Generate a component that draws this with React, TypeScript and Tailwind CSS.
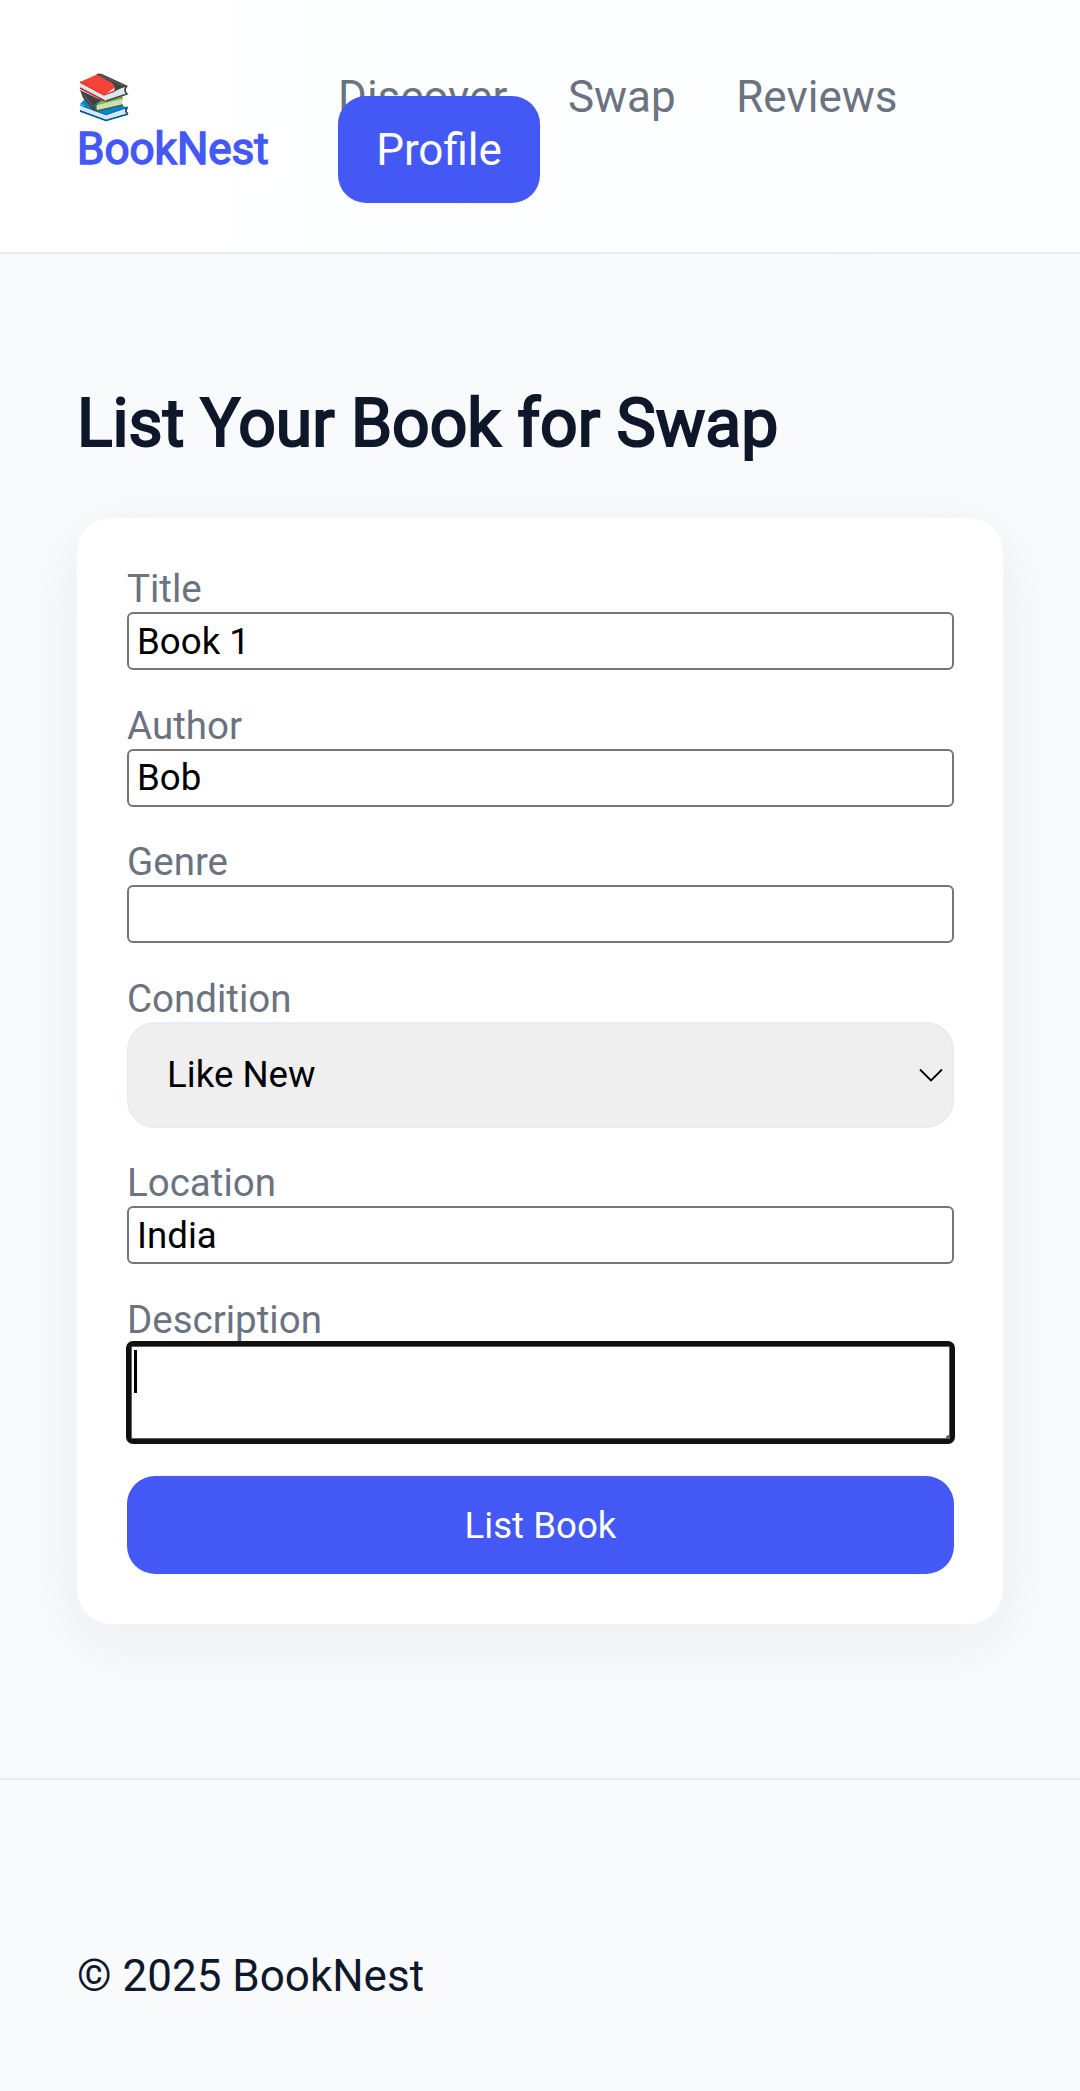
import type { ReactNode } from "react";

function Books() {
  return (
    <svg viewBox="0 0 50 50" className="ml-[2px] block h-[50px] w-[50px]" aria-label="Books">
      <path d="M1 35 L21 25 L49 35 L47 39 L48 42 L27 48 L1 38Z" fill="#0277bd" />
      <path d="M2 33 L27 42 L48 35 Q45 38 48 41 L27 47 L1 37 Q0 35 2 33Z" fill="#d5e8f1" />
      <path d="M1 31 L6 26 L21 27 L46 34 L27 41Z" fill="#0288d1" />
      <path d="M1 32 L27 41.500 L49 34" fill="none" stroke="#0277bd" strokeWidth="1.2" />
      <path d="M1 38 L27 47.500 L49 41" fill="none" stroke="#01579b" strokeWidth="1.5" />
      <path d="M48 34 Q45 38 49 41" fill="none" stroke="#37474f" strokeWidth="1.6" />
      <path d="M22 28 L43 22 L44 25 L42 29 L44 32 L18 38 L14 34Z" fill="#7cb342" />
      <path d="M18 32 L43 26 Q41 29 44 32 L18 37Z" fill="#c9e0b8" />
      <path d="M1 17 L22 27 L15 32 L18 38 L14 37 L4 25Z" fill="#424242" />
      <path d="M5 22 L14 34" stroke="#616161" strokeWidth="1.2" />
      <path d="M18 31 Q14 34 18 38 L44 32" fill="none" stroke="#455a45" strokeWidth="1.3" />
      <path d="M1 9 L25 21 L48 14 Q45 18 47 21 L27 28 L1 15Z" fill="#d9e9f0" />
      <path d="M1 9 L19 1 L41 11 L25 22Z" fill="#f44336" />
      <path d="M17 1 Q20 0 23 1 L49 13 Q47 14 43 15 L34 19 Q38 14 33 10Z" fill="#424242" />
      <path d="M21 2 L44 12.500" stroke="#616161" strokeWidth="1.3" />
      <path d="M1 9 L25 22 L36 18" fill="none" stroke="#e53935" strokeWidth="1.5" />
      <path d="M1 15 L26 28" fill="none" stroke="#c62828" strokeWidth="1.5" />
      <path d="M48 13 Q44 17 48 21 L27 28" fill="none" stroke="#424242" strokeWidth="1.7" />
    </svg>
  );
}

function Field({ label, children }: { label: string; children: ReactNode }) {
  return (
    <label className="block">
      <span className="block h-[46px] text-[38.5px] leading-[45px] text-[#6b7280]">{label}</span>
      {children}
    </label>
  );
}

function TextInput({ value }: { value: string }) {
  return (
    <input
      type="text"
      defaultValue={value}
      className="block h-[58px] w-full rounded-[6px] border-2 border-[#767676] bg-white px-[8px] text-[36.67px] leading-[43px] text-black outline-none"
    />
  );
}

export default function App() {
  return (
    <div className="flex min-h-[2091px] w-[1080px] flex-col bg-[#f8fafc] font-[Roboto,sans-serif] text-[44px] leading-[52px] text-[#0f172a]">
      <header className="flex h-[254px] items-start border-b-2 border-[#e6ecf4] bg-gradient-to-r from-white to-[#fbfdff] px-[77px] pt-[71px]">
        <div className="w-[261px] text-[#4458f5]">
          <div className="h-[52px] pt-[2px]">
            <Books />
          </div>
          <div className="[-webkit-text-stroke:1.5px_#4458f5]">BookNest</div>
        </div>
        <nav className="text-[#6b7280]">
          <div className="flex gap-[60.5px]">
            <a>Discover</a>
            <a>Swap</a>
            <a>Reviews</a>
          </div>
          <a className="relative -mt-[27px] flex h-[107px] w-[202px] items-center justify-center rounded-[28px] bg-[#4458f5] text-white">
            Profile
          </a>
        </nav>
      </header>

      <main className="px-[77px] pt-[130px]">
        <h1 className="h-[134px] text-[66px] leading-[79px] [-webkit-text-stroke:2.2px_#0f172a]">
          List Your Book for Swap
        </h1>
        <form className="flex h-[1106px] w-[926px] flex-col gap-[32.5px] rounded-[34px] bg-white pt-[48px] pr-[49px] pl-[50px] shadow-[0_17px_68px_rgba(30,35,90,0.06)]">
          <Field label="Title">
            <TextInput value="Book 1" />
          </Field>
          <Field label="Author">
            <TextInput value="Bob" />
          </Field>
          <Field label="Genre">
            <TextInput value="" />
          </Field>
          <Field label="Condition">
            <div className="flex h-[106px] items-center justify-between rounded-[28px] border-2 border-[#e6ecf4] bg-[#efefef] pr-[9px] pl-[38px] text-[36.67px] text-black">
              <span>Like New</span>
              <svg viewBox="0 0 24 14" className="h-[14px] w-[24px]" fill="none" stroke="#000" strokeWidth="1.8">
                <path d="M1 1.500 L12 12.500 L23 1.500" />
              </svg>
            </div>
          </Field>
          <Field label="Location">
            <TextInput value="India" />
          </Field>
          <Field label="Description">
            <div className="relative -mx-px -mt-[1.5px] h-[103px] rounded-[7px] border-[5px] border-[#101010] bg-white pt-[4px] pl-[3px] ring-1 ring-[#606060] ring-inset">
              <div className="h-[43px] w-[3px] bg-black" />
              <div className="absolute right-0 bottom-0 h-[4px] w-[4px] rounded-tl-[3px] bg-[#606060]" />
            </div>
          </Field>
          <button
            type="button"
            className="-mt-[0.5px] h-[98px] shrink-0 rounded-[28px] bg-[#4458f5] pt-[2px] text-[36.67px] text-white"
          >
            List Book
          </button>
        </form>
      </main>

      <footer className="mt-[154px] border-t-2 border-[#e6ecf4] px-[77px] pt-[170px]">© 2025 BookNest</footer>
    </div>
  );
}
